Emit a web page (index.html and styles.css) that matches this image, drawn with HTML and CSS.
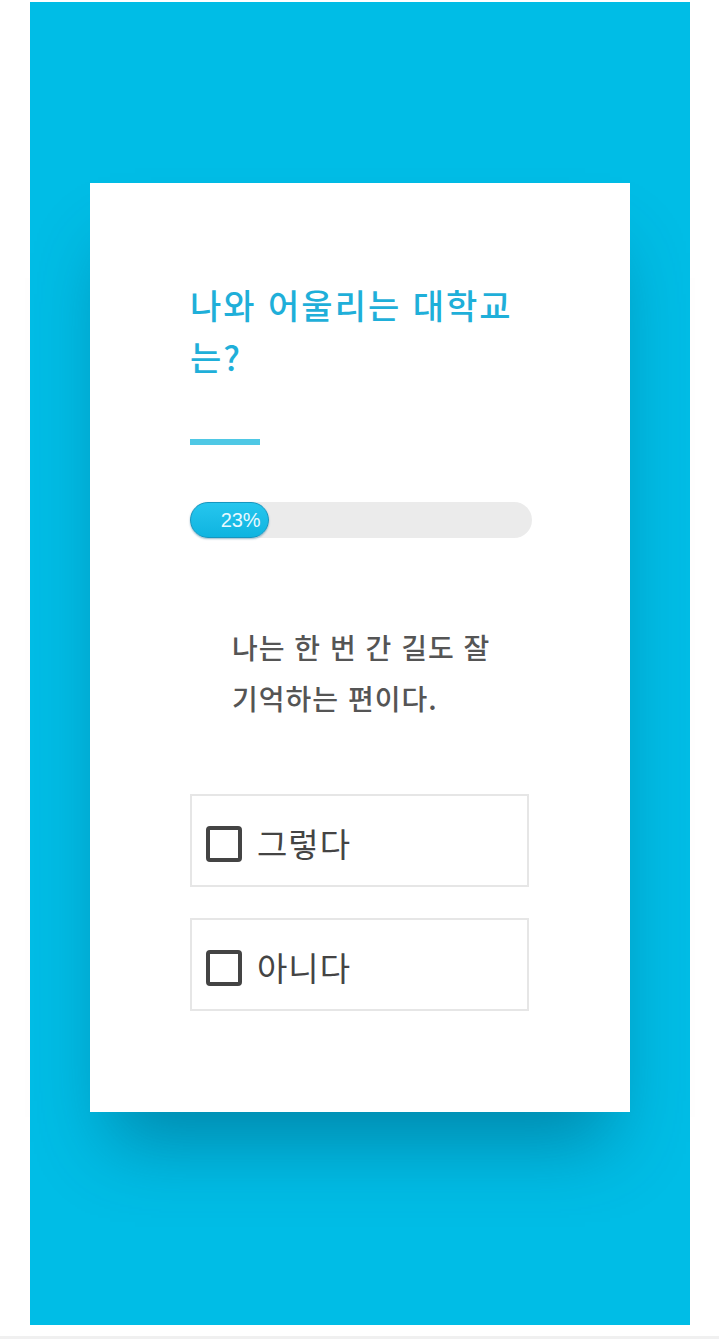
FILE: index.html
```html
<!DOCTYPE html>
<html lang="ko">
<head>
<meta charset="utf-8">
<title>나와 어울리는 대학교는?</title>
<link rel="stylesheet" href="styles.css">
</head>
<body>
<div class="panel">
  <div class="card">
    <h1 class="title">나와 어울리는 대학교는?</h1>
    <div class="accent"></div>
    <div class="progress">
      <div class="progress-fill" style="width: 23%"><span>23%</span></div>
    </div>
    <p class="question">나는 한 번 간 길도 잘 기억하는 편이다.</p>
    <div class="options">
      <label class="option"><span class="box"></span><span class="label">그렇다</span></label>
      <label class="option"><span class="box"></span><span class="label">아니다</span></label>
    </div>
  </div>
</div>
<div class="footer-line"></div>
</body>
</html>
```

FILE: styles.css
```css
html, body {
  margin: 0;
  padding: 0;
  background: #ffffff;
}
body {
  font-family: "Noto Sans CJK KR", "Noto Sans", sans-serif;
  height: 1339px;
  overflow: hidden;
}
.panel {
  margin: 2px 29px 0 30px;
  height: 1323px;
  background: #00bde6;
  padding-top: 181px;
  box-sizing: border-box;
}
.card {
  margin: 0 60px;
  height: 929px;
  background: #ffffff;
  padding: 96px 100px 0 100px;
  box-sizing: border-box;
  box-shadow: 0 50px 70px -20px rgba(0, 70, 100, 0.45);
}
.title {
  margin: 0;
  font-size: 34px;
  line-height: 52px;
  font-weight: 500;
  color: #1fafd9;
  letter-spacing: 2px;
  width: 340px;
}
.accent {
  width: 70px;
  height: 6px;
  background: #4fc8e5;
  margin-top: 56px;
}
.progress {
  margin-top: 57px;
  height: 36px;
  width: 342px;
  border-radius: 18px;
  background: #ebebeb;
  position: relative;
}
.progress-fill {
  height: 36px;
  box-sizing: border-box;
  border-radius: 18px;
  border: 1px solid #1596c0;
  background: linear-gradient(#26c6ee, #0fb4e0);
  display: flex;
  align-items: center;
  justify-content: flex-end;
  padding-right: 7px;
  box-shadow: 0 1px 2px rgba(0, 80, 120, 0.4);
}
.progress-fill span {
  font-family: "Liberation Sans", Arial, sans-serif;
  font-size: 20px;
  color: #e9f9ff;
}
.question {
  margin: 84px 0 0 0;
  padding-left: 42px;
  width: 298px;
  font-size: 28px;
  line-height: 51px;
  font-weight: 500;
  color: #555555;
  letter-spacing: 1px;
  word-break: keep-all;
}
.options {
  margin-top: 70px;
  display: flex;
  flex-direction: column;
  gap: 31px;
}
.option {
  display: flex;
  align-items: center;
  width: 339px;
  height: 93px;
  box-sizing: border-box;
  border: 2px solid #e6e6e6;
  padding: 7px 0 0 14px;
  gap: 15px;
}
.box {
  width: 36px;
  height: 36px;
  box-sizing: border-box;
  border: 4px solid #444444;
  border-radius: 4px;
  flex: none;
}
.label {
  font-size: 33px;
  color: #444444;
  line-height: 1;
  padding-bottom: 2px;
  letter-spacing: 1px;
}
.footer-line {
  margin-top: 11px;
  height: 3px;
  background: #f0f0f0;
}
```
